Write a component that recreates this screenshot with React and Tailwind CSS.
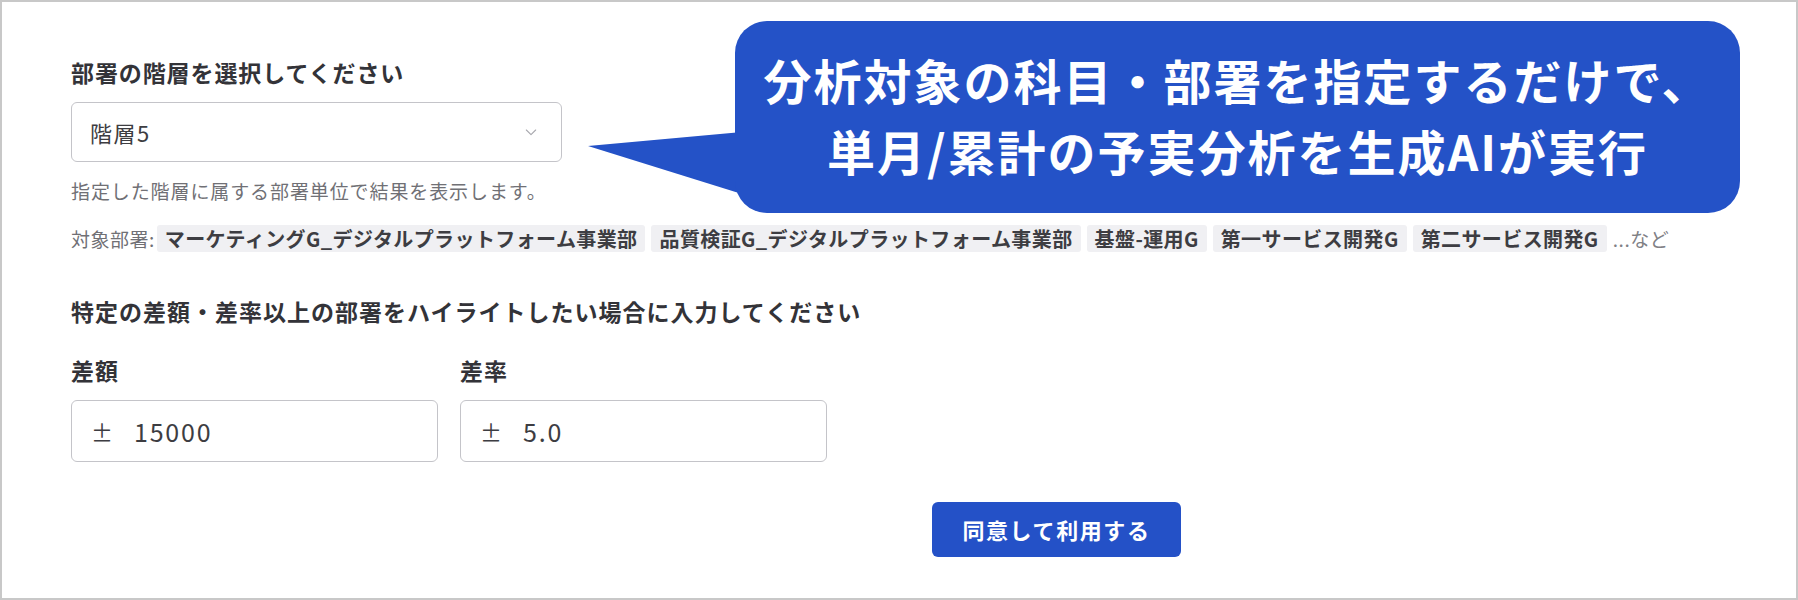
import React from "react";

const FONT = { fontFamily: '"Noto Sans CJK JP", "Noto Sans", "Liberation Sans", sans-serif' };

function Tag({ children }) {
  return (
    <span className="h-[27px] px-[8px] flex items-center bg-[#f0f0f3] rounded-[3px] text-[20px] tracking-[0.4px] font-bold text-[#3d3d42] leading-none whitespace-nowrap">
      {children}
    </span>
  );
}

function NumInput({ value }) {
  return (
    <div className="w-[367px] h-[62px] border-[1.5px] border-[#c4c4c9] rounded-[6px] flex items-center pl-[19px] text-[#3d3d42]">
      <span className="w-[43px] text-[22px] leading-none">±</span>
      <span className="text-[25px] tracking-[1.8px] leading-none">{value}</span>
    </div>
  );
}

export default function App() {
  return (
    <div style={FONT} className="relative w-[1798px] h-[600px] bg-white border-2 border-[#c8c8c8] overflow-hidden">
      <div className="pl-[69px] pt-[54px] flex flex-col">
        <div className="text-[23px] tracking-[0.9px] leading-[32px] font-bold text-[#333338]">
          部署の階層を選択してください
        </div>
        <div className="mt-[14px] w-[491px] h-[60px] border-[1.5px] border-[#c4c4c9] rounded-[6px] flex items-center justify-between pl-[18px] pr-[22px]">
          <span className="text-[22px] tracking-[1.5px] text-[#3d3d42] leading-none">階層5</span>
          <svg width="16" height="16" viewBox="0 0 24 24" fill="none" stroke="#a8a8ae" strokeWidth="1.6" strokeLinecap="round" strokeLinejoin="round">
            <path d="M5 9l7 7 7-7" />
          </svg>
        </div>
        <div className="mt-[15px] text-[19px] tracking-[0.9px] leading-[28px] text-[#707075]">
          指定した階層に属する部署単位で結果を表示します。
        </div>
        <div className="mt-[20px] flex items-center gap-[6px]">
          <span className="text-[19px] tracking-[0.5px] text-[#707075] leading-none mr-[-4px]">対象部署:</span>
          <Tag>マーケティングG_デジタルプラットフォーム事業部</Tag>
          <Tag>品質検証G_デジタルプラットフォーム事業部</Tag>
          <Tag>基盤-運用G</Tag>
          <Tag>第一サービス開発G</Tag>
          <Tag>第二サービス開発G</Tag>
          <span className="text-[19px] tracking-[0.6px] text-[#808085] leading-none">...など</span>
        </div>
        <div className="mt-[43px] text-[23px] tracking-[1px] leading-[32px] font-bold text-[#333338]">
          特定の差額・差率以上の部署をハイライトしたい場合に入力してください
        </div>
        <div className="mt-[27px] flex gap-[22px]">
          <div className="w-[367px] text-[23px] tracking-[0.9px] leading-[32px] font-bold text-[#333338]">差額</div>
          <div className="w-[367px] text-[23px] tracking-[0.9px] leading-[32px] font-bold text-[#333338]">差率</div>
        </div>
        <div className="mt-[14px] flex gap-[22px]">
          <NumInput value="15000" />
          <NumInput value="5.0" />
        </div>
        <div className="mt-[40px] ml-[861px]">
          <button className="w-[249px] h-[55px] rounded-[6px] bg-[#2451c7] text-white text-[22px] tracking-[1.6px] font-bold flex items-center justify-center">
            同意して利用する
          </button>
        </div>
      </div>

      {/* callout */}
      <div className="absolute left-[733px] top-[19px] w-[1005px] h-[192px]">
        <svg className="absolute left-[-150px] top-[100px]" width="160" height="80" viewBox="0 0 160 80">
          <polygon points="3,25 157,11 157,73" fill="#2452c7" />
        </svg>
        <div className="absolute inset-0 rounded-[32px] bg-[#2452c7] flex flex-col items-center justify-center pb-[4px] text-white font-bold text-[48px] tracking-[2px] leading-[71px]">
          <div>分析対象の科目・部署を指定するだけで、</div>
          <div>単月/累計の予実分析を生成AIが実行</div>
        </div>
      </div>
    </div>
  );
}
